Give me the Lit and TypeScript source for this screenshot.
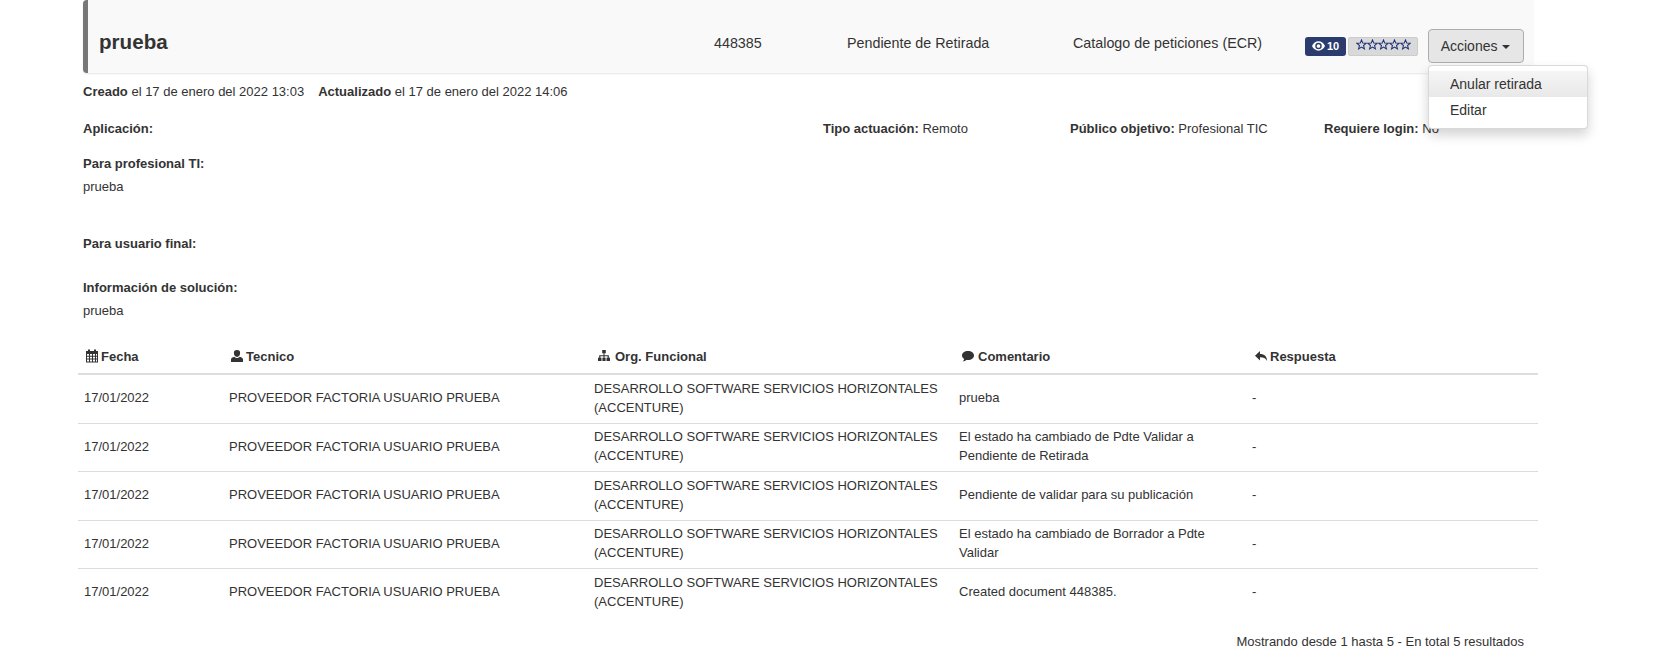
import { LitElement, html, css, svg } from "lit";
import { customElement } from "lit/decorators.js";

const icons: Record<string, unknown> = {
  cal: svg`<path d="M1 2h2V0.5h2V2h4V0.5h2V2h2v11.500H1zM2 5v1.800h2V5zm3 0v1.800h2V5zm3 0v1.800h2V5zm3 0v1.800h1V5zM2 7.800v1.800h2V7.800zm3 0v1.800h2V7.800zm3 0v1.800h2V7.800zm3 0v1.800h1V7.800zM2 10.600v1.800h2v-1.800zm3 0v1.800h2v-1.800zm3 0v1.800h2v-1.800zm3 0v1.800h1v-1.800z" fill-rule="evenodd"/>`,
  user: svg`<path d="M7 1a3.100 3.100 0 0 1 3.100 3.300C10.100 6 9 8 7 8S3.900 6 3.900 4.300A3.100 3.100 0 0 1 7 1zM1 13v-2.500C1 9 2.500 8.300 4.200 7.800 5 8.600 6 9 7 9s2-.4 2.800-1.200C11.500 8.300 13 9 13 10.500V13z"/>`,
  org: svg`<path d="M5.200 1h3.600v3.200H7.500v2h4.300v2.600H13V12H9.500V8.800h1.100V7.300H7.500v1.500h1.100V12H5.400V8.800h1.100V7.300H3.400v1.500h1.100V12H1V8.800h1.200V6.200h4.300v-2H5.200z"/>`,
  chat: svg`<path d="M7 2c3.500 0 6 2 6 4.500S10.500 11 7 11c-.5 0-1 0-1.500-.1C4.500 11.800 3.200 12.300 1.800 12.500 2.500 11.700 3 11 3.200 10 1.800 9.200 1 8 1 6.500 1 4 3.500 2 7 2z"/>`,
  reply: svg`<path d="M6 2v3c4.500 0 7 2.300 7 7-1.200-2.700-3.500-3.700-7-3.700V11.500L1 6.700z"/>`,
};

function icon(name: string) {
  return html`<svg class="ico ico-${name}" viewBox="0 0 14 14" aria-hidden="true">${icons[name]}</svg>`;
}

const rows: unknown[] = [
  "prueba",
  html`El estado ha cambiado de Pdte Validar a<br />Pendiente de Retirada`,
  "Pendiente de validar para su publicación",
  html`El estado ha cambiado de Borrador a Pdte<br />Validar`,
  "Created document 448385.",
];

const star = html`<svg class="star" viewBox="0 0 12 12" aria-hidden="true"><path d="M6 1l1.400 3.500 3.700.2-2.900 2.400 1 3.600L6 8.700l-3.200 2 1-3.600L.9 4.700l3.700-.2z"/></svg>`;

@customElement("app-root")
export class AppRoot extends LitElement {
  static styles = css`
    :host {
      display: block;
      width: 1674px;
      height: 658px;
      overflow: hidden;
      background: #fff;
      color: #333;
      font-family: "Liberation Sans", Arial, sans-serif;
      font-size: 13px;
      line-height: 18px;
      position: relative;
    }
    .wrap {
      padding: 0 238px 0 83px;
    }
    .head {
      height: 73px;
      width: 1450px;
      box-sizing: border-box;
      padding-top: 12px;
      background: #f9f9f9;
      border-left: 5px solid #777;
      border-radius: 4px 0 0 4px;
      box-shadow: 0 1px 2px rgba(0, 0, 0, 0.1);
      display: grid;
      grid-template-columns: 626px 133px 226px 234px 1fr;
      align-items: center;
      font-size: 14.3px;
    }
    .head h1 {
      margin: 0 0 2px 11px;
      font-size: 20.6px;
      line-height: 24px;
      font-weight: 700;
      color: #333;
    }
    .ctl {
      display: flex;
      align-items: center;
      margin: 7px 0 0 -2px;
    }
    .views {
      background: #2a3b6d;
      color: #fff;
      font-size: 11px;
      font-weight: 700;
      height: 19px;
      line-height: 19px;
      padding: 0 3px 0 7px;
      border-radius: 3px;
      display: flex;
      gap: 2px;
      align-items: center;
      width: 31px;
    }
    .views svg { width: 13px; height: 10px; fill: #fff; }
    .stars {
      margin-left: 2px;
      width: 70px;
      height: 19px;
      box-sizing: border-box;
      background: #d9d9d9;
      border: 1px solid #ccc;
      border-radius: 2px;
      display: flex;
      justify-content: center;
      padding-top: 1px;
    }
    .star {
      width: 11px;
      height: 11px;
      fill: none;
      stroke: #1f2f78;
      stroke-width: 1.1;
    }
    .btn {
      margin-left: 10px;
      box-sizing: border-box;
      width: 96px;
      height: 34px;
      background: #e6e6e6;
      border: 1px solid #adadad;
      border-radius: 4px;
      color: #333;
      font: 14px/20px "Liberation Sans", Arial, sans-serif;
      padding: 0 1px 0 0;
    }
    .caret {
      display: inline-block;
      margin-left: 1px;
      vertical-align: middle;
      border-top: 4px solid #333;
      border-left: 4px solid transparent;
      border-right: 4px solid transparent;
    }
    .menu {
      position: absolute;
      left: 1428px;
      top: 65px;
      width: 160px;
      box-sizing: border-box;
      padding: 5px 0;
      background: #fff;
      border: 1px solid rgba(0, 0, 0, 0.15);
      border-radius: 4px;
      box-shadow: 0 6px 12px rgba(0, 0, 0, 0.175);
      font: 14px/20px "Liberation Sans", Arial, sans-serif;
      color: #333;
    }
    .menu div {
      padding: 3px 20px 3px 21px;
      height: 20px;
    }
    .menu .on { background: linear-gradient(#f5f5f5, #e8e8e8); }
    .dates {
      margin-top: 10px;
      display: flex;
      gap: 14px;
    }
    b { font-weight: 700; }
    .meta {
      margin-top: 19px;
      display: grid;
      grid-template-columns: 740px 247px 254px 1fr;
      white-space: nowrap;
    }
    .block { margin-top: 17px; }
    .block b { display: block; margin-bottom: 5px; }
    .b2 { margin-top: 39px; }
    .b3 { margin-top: 26px; }
    table {
      border-collapse: collapse;
      table-layout: fixed;
      width: 1460px;
      margin: 17px 0 0 -5px;
    }
    th {
      text-align: left;
      font-weight: 700;
      height: 37px;
      padding: 3px 6px 0;
      box-sizing: border-box;
      border-bottom: 2px solid #ddd;
      vertical-align: middle;
      white-space: nowrap;
    }
    td {
      height: 48px;
      box-sizing: border-box;
      padding: 0 6px 2px;
      border-bottom: 1px solid #ddd;
      vertical-align: middle;
      line-height: 19px;
    }
    tr:nth-child(odd) td { height: 49px; }
    tr:last-child td { border-bottom: 0; }
    .ico {
      width: 14px;
      height: 14px;
      fill: #333;
      vertical-align: -2px;
      margin: 0 2px 0 1px;
    }
    .ico-org { margin-left: 3px; margin-right: 4px; }
    .ico-chat { margin-right: 3px; margin-left: 2px; }
    .ico-reply { margin-left: 2px; }
    .foot {
      margin-top: 16px;
      width: 1441px;
      text-align: right;
    }
  `;

  render() {
    return html`
      <div class="wrap">
        <div class="head">
          <h1>prueba</h1>
          <div>448385</div>
          <div>Pendiente de Retirada</div>
          <div>Catalogo de peticiones (ECR)</div>
          <div class="ctl">
            <span class="views">
              <svg viewBox="0 0 14 10"><path fill-rule="evenodd" d="M7 0c3 0 5.600 2 7 5-1.400 3-4 5-7 5S1.400 8 0 5c1.400-3 4-5 7-5zm0 1.500A3.500 3.500 0 1 0 7 8.500 3.500 3.500 0 0 0 7 1.500zM7 3a2 2 0 1 1 0 4 2 2 0 0 1 0-4z"/></svg>
              10
            </span>
            <span class="stars">${star}${star}${star}${star}${star}</span>
            <button class="btn">Acciones <span class="caret"></span></button>
          </div>
        </div>
        <div class="dates">
          <span><b>Creado</b> el 17 de enero del 2022 13:03</span>
          <span><b>Actualizado</b> el 17 de enero del 2022 14:06</span>
        </div>
        <div class="meta">
          <div><b>Aplicación:</b></div>
          <div><b>Tipo actuación:</b> Remoto</div>
          <div><b>Público objetivo:</b> Profesional TIC</div>
          <div><b>Requiere login:</b> No</div>
        </div>
        <div class="block"><b>Para profesional TI:</b><div>prueba</div></div>
        <div class="block b2"><b>Para usuario final:</b></div>
        <div class="block b3"><b>Información de solución:</b><div>prueba</div></div>
        <table>
          <colgroup>
            <col style="width:145px" /><col style="width:365px" /><col style="width:365px" /><col style="width:293px" /><col />
          </colgroup>
          <thead>
            <tr>
              <th>${icon("cal")}Fecha</th>
              <th>${icon("user")}Tecnico</th>
              <th>${icon("org")}Org. Funcional</th>
              <th>${icon("chat")}Comentario</th>
              <th>${icon("reply")}Respuesta</th>
            </tr>
          </thead>
          <tbody>
            ${rows.map(
              (c) => html`<tr>
                <td>17/01/2022</td>
                <td>PROVEEDOR FACTORIA USUARIO PRUEBA</td>
                <td>DESARROLLO SOFTWARE SERVICIOS HORIZONTALES (ACCENTURE)</td>
                <td>${c}</td>
                <td>-</td>
              </tr>`
            )}
          </tbody>
        </table>
        <div class="foot">Mostrando desde 1 hasta 5 - En total 5 resultados</div>
      </div>
      <div class="menu">
        <div class="on">Anular retirada</div>
        <div>Editar</div>
      </div>
    `;
  }
}
